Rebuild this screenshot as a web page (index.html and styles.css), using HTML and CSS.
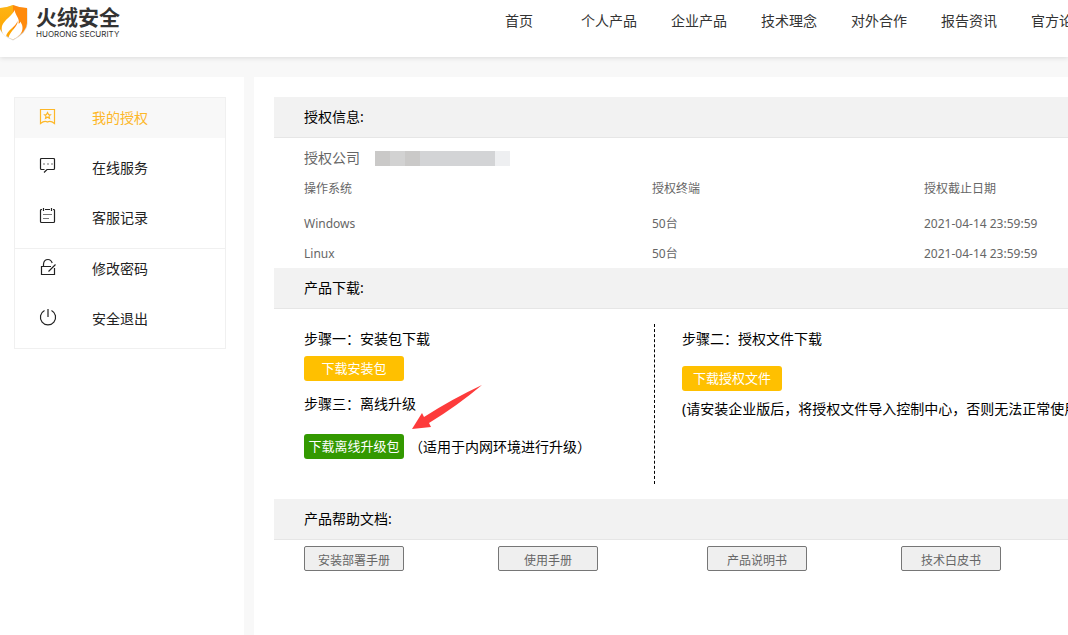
FILE: index.html
```html
<!DOCTYPE html>
<html lang="zh-CN">
<head>
<meta charset="utf-8">
<meta name="viewport" content="width=device-width, initial-scale=1">
<title>火绒安全</title>
<link rel="stylesheet" href="styles.css">
</head>
<body>
<header class="header">
  <a class="brand" href="#">
    <svg class="brand-mark" viewBox="0 0 28 36" aria-hidden="true">
      <defs>
        <linearGradient id="shieldLeft" x1="0" y1="0" x2="0" y2="1">
          <stop offset="0" stop-color="#fdb515"/><stop offset="1" stop-color="#ffa200"/>
        </linearGradient>
      </defs>
      <path d="M0 3.500Q7 3 13 0Q20 3 27.500 3.500V19Q27 28 13 35.500Q3 31 0 25Z" fill="#d8d8d8"/>
      <path d="M0 3Q7 2.500 13 0V34.500Q3 30 0 24Z" fill="url(#shieldLeft)"/>
      <path d="M13 0Q20 3 27 3V18Q27 27 13 34.500Z" fill="#ff8a0c"/>
      <path d="M14.500 5C13 10 4 15 2 21C1 26 2.500 29 6 31.500C7 25 16 22 17.500 16C18.500 21 10 26 8.500 32.500L13 34.500C19 31.500 22.500 28 22.500 23C22.500 20 21.500 19 20.500 16.500C20 18 19.500 18.500 18.500 18.500C20 13 15.500 11 14.500 5Z" fill="#fff"/>
    </svg>
    <span class="brand-text">
      <span class="brand-name">火绒安全</span>
      <span class="brand-sub">HUORONG SECURITY</span>
    </span>
  </a>
  <nav class="nav">
    <a href="#">首页</a>
    <a href="#">个人产品</a>
    <a href="#">企业产品</a>
    <a href="#">技术理念</a>
    <a href="#">对外合作</a>
    <a href="#">报告资讯</a>
    <a href="#">官方论坛</a>
  </nav>
</header>

<div class="layout">
  <aside class="sidebar">
    <nav class="menu">
      <div class="menu-group">
        <a class="menu-item active" href="#">
          <svg class="menu-icon" viewBox="0 0 18 18"><path d="M1.500 2.500h14v14Q11.500 13 8.500 15Q5.500 13 1.500 16.500Z"/><path d="M8.500 5.500l1 2 2 .2-1.500 1.500.5 2.200-2-1.100-2 1.100.5-2.200-1.500-1.500 2-.2z"/></svg>
          <span>我的授权</span>
        </a>
        <a class="menu-item" href="#">
          <svg class="menu-icon" viewBox="0 0 18 18"><path d="M5 15.500L8 12.500H14.500Q15.500 12.500 15.500 11.500V2.500Q15.500 1.500 14.500 1.500H2.500Q1.500 1.500 1.500 2.500V11.500Q1.500 12.500 2.500 12.500H5.500"/><path class="soft" d="M4 7h2M8 7h2M12 7h2"/></svg>
          <span>在线服务</span>
        </a>
        <a class="menu-item" href="#">
          <svg class="menu-icon" viewBox="0 0 18 18"><path d="M3 2.500H2.500Q1.500 2.500 1.500 3.500V14.500Q1.500 15.500 2.500 15.500H14.500Q15.500 15.500 15.500 14.500V3.500Q15.500 2.500 14.500 2.500H14M6 2.500h5M4.500 1v3M12.500 1v3"/><path class="soft" d="M4 7.500h9M4 11.500h6"/></svg>
          <span>客服记录</span>
        </a>
      </div>
      <div class="menu-group">
        <a class="menu-item" href="#">
          <svg class="menu-icon" viewBox="0 0 18 18"><path d="M12 8.500H2.500V16.500H15.500V10M4.500 8.500V6Q5 1.500 9 1.500Q12 1.500 13.200 5M9.500 13.500L16.500 6.500"/></svg>
          <span>修改密码</span>
        </a>
        <a class="menu-item" href="#">
          <svg class="menu-icon" viewBox="0 0 18 18"><path d="M9 1V9M5.500 2.500A7.600 7.600 0 1 0 12.500 2.500"/></svg>
          <span>安全退出</span>
        </a>
      </div>
    </nav>
  </aside>

  <main class="content">
    <section>
      <h2 class="section-title">授权信息:</h2>
      <div class="section-body">
        <p class="company"><span>授权公司</span><span class="redacted"><i></i><i></i><i></i><i></i><i></i><i></i><i></i><i></i><i></i></span></p>
        <table class="licenses">
          <colgroup><col class="col-os"><col class="col-count"><col></colgroup>
          <thead><tr><th>操作系统</th><th>授权终端</th><th>授权截止日期</th></tr></thead>
          <tbody>
            <tr><td>Windows</td><td>50台</td><td>2021-04-14 23:59:59</td></tr>
            <tr><td>Linux</td><td>50台</td><td>2021-04-14 23:59:59</td></tr>
          </tbody>
        </table>
      </div>
    </section>

    <section>
      <h2 class="section-title">产品下载:</h2>
      <div class="section-body downloads">
        <div class="steps steps-main">
          <p>步骤一：安装包下载</p>
          <button class="btn btn-first" type="button">下载安装包</button>
          <p class="step-next">步骤三：离线升级</p>
          <div class="offline">
            <button class="btn btn-green" type="button">下载离线升级包</button>
            <span>（适用于内网环境进行升级）</span>
          </div>
          <svg class="arrow" viewBox="0 0 70 46" aria-hidden="true"><path d="M0 45L10 29L12 33Q40 15 70 1Q45 22 17 39L19 43Z" fill="#fd3b3b"/></svg>
        </div>
        <div class="steps steps-license">
          <p>步骤二：授权文件下载</p>
          <button class="btn btn-license" type="button">下载授权文件</button>
          <p class="note">(请安装企业版后，将授权文件导入控制中心，否则无法正常使用)</p>
        </div>
      </div>
    </section>

    <section>
      <h2 class="section-title">产品帮助文档:</h2>
      <div class="section-body docs">
        <div class="doc-pair">
          <button class="doc" type="button">安装部署手册</button>
          <button class="doc" type="button">使用手册</button>
        </div>
        <div class="doc-pair">
          <button class="doc" type="button">产品说明书</button>
          <button class="doc" type="button">技术白皮书</button>
        </div>
      </div>
    </section>
  </main>
</div>
</body>
</html>
```
FILE: styles.css
```css
* {
  box-sizing: border-box;
}

body {
  display: flex;
  flex-direction: column;
  min-height: 100vh;
  margin: 0;
  overflow-x: hidden;
  background: #f8f8f8;
  color: #000;
  font: 14px/30px "Noto Sans", "Noto Sans CJK SC", sans-serif;
}

p,
h2 {
  margin: 0;
}

a {
  color: inherit;
  text-decoration: none;
}

button {
  padding: 0;
  font-family: inherit;
  cursor: pointer;
}

/* Header */
.header {
  position: relative;
  display: flex;
  gap: 354px;
  height: 57px;
  background: #fff;
  box-shadow: 0 1px 5px rgba(0, 0, 0, 0.12);
}

.brand {
  display: flex;
  flex: none;
  gap: 8px;
  width: 120px;
  padding-top: 5px;
}

.brand-mark {
  flex: none;
  width: 28px;
  height: 36px;
}

.brand-text {
  display: flex;
  flex-direction: column;
  gap: 2px;
  color: #333;
  white-space: nowrap;
}

.brand-name {
  font: 700 21px/22px "Noto Sans CJK SC", sans-serif;
}

.brand-sub {
  font: 8px/10px Inter, sans-serif;
}

.nav {
  display: flex;
  color: #333;
}

.nav a {
  flex: none;
  width: 90px;
  line-height: 42px;
  text-align: center;
}

/* Page columns */
.layout {
  display: flex;
  flex: 1;
  gap: 10px;
  padding-top: 20px;
}

.sidebar {
  flex: none;
  width: 244px;
  padding: 20px 18px 20px 14px;
  background: #fff;
}

.menu {
  border: 1px solid #f0f0f0;
}

.menu-group {
  display: flex;
  flex-direction: column;
  gap: 10px;
  padding-bottom: 10px;
}

.menu-group + .menu-group {
  padding-bottom: 9px;
  border-top: 1px solid #f0f0f0;
}

.menu-item {
  display: flex;
  gap: 35px;
  padding-left: 24px;
  color: #222;
  line-height: 40px;
}

.menu-item.active {
  background: #f8f8f8;
  color: #fdb728;
}

.menu-icon {
  width: 18px;
  height: 18px;
  margin-top: 9px;
  fill: none;
  stroke: currentColor;
  stroke-width: 1.2;
}

.menu-icon .soft {
  stroke: #777;
}

.content {
  flex: 1;
  min-width: 0;
  padding: 20px 0 20px 20px;
  background: #fff;
}

.section-title {
  padding-left: 30px;
  border-bottom: 1px solid #e6e6e6;
  background: #f2f2f2;
  font-size: 14px;
  font-weight: 400;
  line-height: 40px;
}

.section-body {
  padding-left: 30px;
}

/* License details */
.company {
  display: flex;
  align-items: center;
  gap: 15px;
  color: #666;
  line-height: 40px;
}

.redacted {
  display: flex;
}

.redacted i {
  width: 15px;
  height: 15px;
  background: #d2d2d2;
}

.redacted i:nth-child(odd) {
  background: #cac9c8;
}

.redacted i:nth-child(n + 4) {
  background: #d3d4d6;
}

.redacted i:last-child {
  background: #eeeff1;
}

.licenses {
  width: 100%;
  border-collapse: collapse;
  table-layout: fixed;
  color: #666;
  font-size: 12px;
}

.col-os {
  width: 348px;
}

.col-count {
  width: 272px;
}

.licenses th,
.licenses td {
  height: 30px;
  padding: 2px 0 0;
  font-weight: 400;
  line-height: 28px;
  text-align: left;
}

.licenses th {
  line-height: 18px;
  vertical-align: top;
}

/* Downloads */
.downloads {
  display: flex;
  padding-top: 15px;
  padding-bottom: 15px;
  white-space: nowrap;
}

.steps-main {
  position: relative;
  flex: none;
  width: 351px;
  min-height: 160px;
  border-right: 1px dashed #000;
}

.steps-license {
  flex: 1;
  min-width: 0;
  padding-left: 27px;
  overflow: hidden;
}

.btn {
  display: block;
  width: 100px;
  height: 25px;
  border: 0;
  border-radius: 3px;
  background: #ffc000;
  color: #fff;
  font-size: 13px;
  line-height: 25px;
}

.btn-green {
  background: #339900;
}

.btn-first {
  margin-top: 2px;
}

.btn-license {
  margin-top: 12px;
}

.step-next {
  margin-top: 8px;
}

.note {
  margin-top: 3px;
}

.offline {
  display: flex;
  gap: 5px;
  margin-top: 15px;
  line-height: 25px;
}

.arrow {
  position: absolute;
  top: 60px;
  left: 108px;
  width: 70px;
  height: 46px;
}

/* Help documents */
.docs {
  display: flex;
  gap: 109px;
  padding-top: 6px;
}

.doc-pair {
  display: flex;
  gap: 94px;
}

.doc {
  width: 100px;
  height: 25px;
  padding-top: 2px;
  border: 1px solid #767676;
  border-radius: 2px;
  background: #efefef;
  color: #666;
  font-size: 12px;
}
```
